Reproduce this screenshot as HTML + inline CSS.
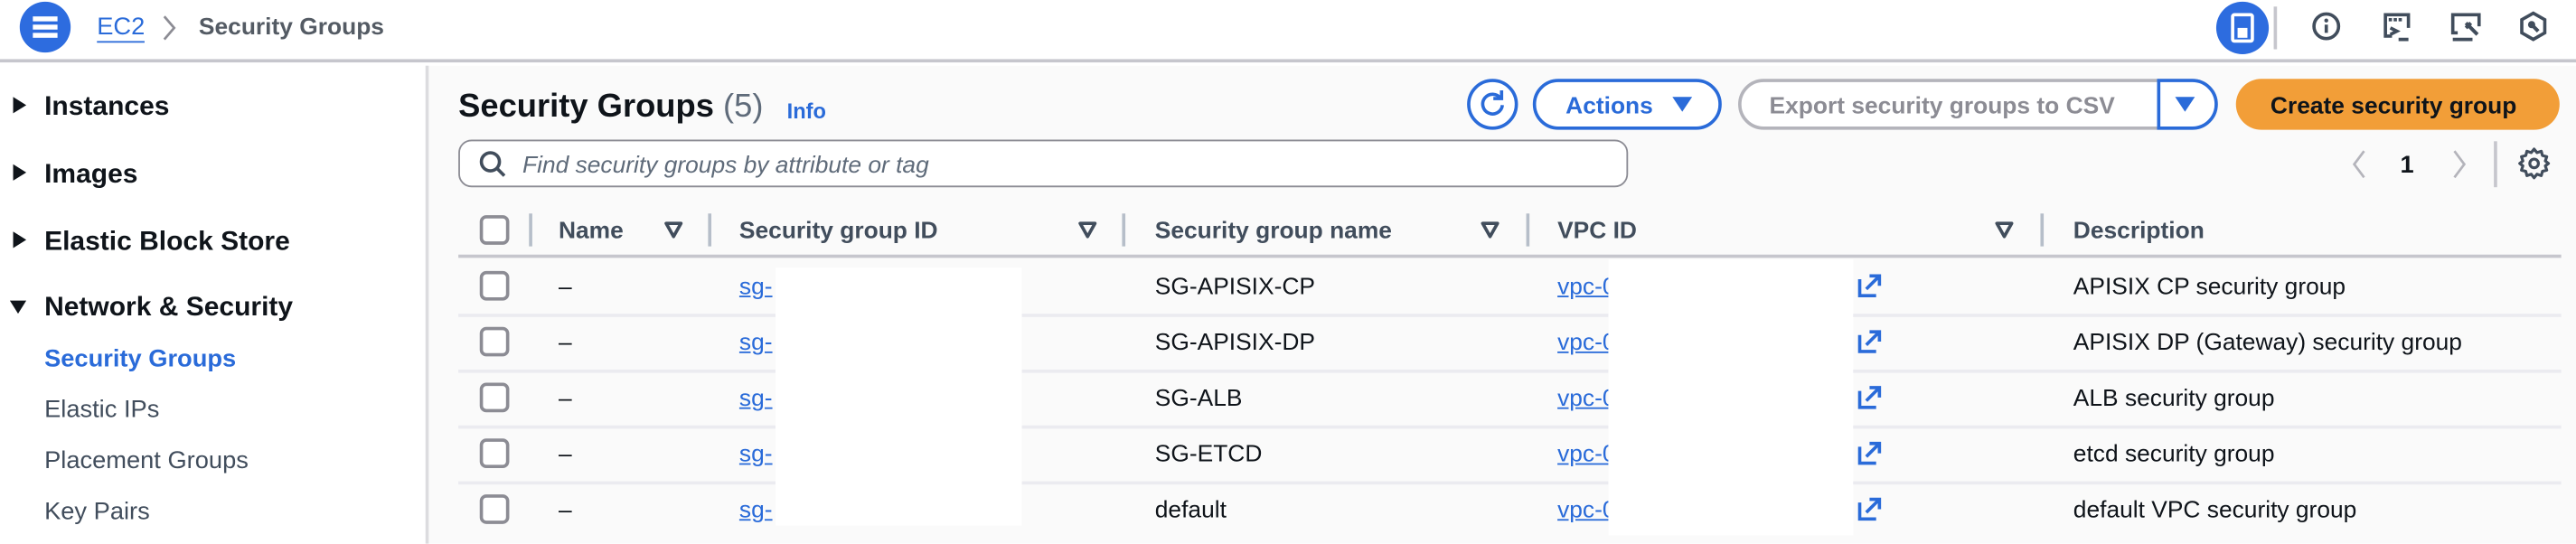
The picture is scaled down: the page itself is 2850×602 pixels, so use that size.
<!DOCTYPE html>
<html><head><meta charset="utf-8"><style>
*{margin:0;padding:0;box-sizing:border-box}
html,body{width:2850px;height:602px;overflow:hidden;background:#fff;font-family:"Liberation Sans",sans-serif}
#w{position:absolute;left:0;top:0;width:1568px;height:331px;transform:scale(1.8176);transform-origin:0 0;background:#fff}
.a{position:absolute;white-space:nowrap}
.nav{font-size:16.5px;font-weight:bold;color:#0f141a}
.sub{font-size:15px;color:#414d5c}
.th{font-size:14.5px;font-weight:bold;color:#414d5c;top:131px}
.cell{font-size:14.5px;color:#0f141a}
.nav,.sub,.th,.cell,.t{margin-top:2px}
.lnk{color:#2a6bd9;text-decoration:underline}
.cb{position:absolute;width:18px;height:18px;border:2px solid #8c8c94;border-radius:4px;background:#fff}
.div{position:absolute;width:2px;height:20px;background:#b6bec9;top:130px}
.sep{position:absolute;left:279px;width:1280px;height:2px;background:#ebebf0}
.tri{position:absolute;width:0;height:0}
</style></head><body><div id="w">
<div class="a" style="left:0;top:0;width:1568px;height:38px;background:#fff;border-bottom:2px solid #c6c6cd"></div>
<div class="a" style="left:12px;top:1px;width:31px;height:31px;border-radius:50%;background:#2d6cdf"></div>
<div class="a" style="left:20px;top:10px;width:15px;height:2.5px;background:#fff;box-shadow:0 5px 0 #fff,0 10px 0 #fff"></div>
<div class="a" style="left:59px;top:8px;font-size:15px;color:#2a6bd9;border-bottom:1.5px solid #2a6bd9;line-height:17px">EC2</div>
<svg class="a" style="left:98px;top:8px" width="10" height="18"><path d="M2 2l6 7-6 7" fill="none" stroke="#8c8c94" stroke-width="1.5"/></svg>
<div class="a" style="left:121px;top:9px;font-size:14.5px;font-weight:bold;color:#545b64">Security Groups</div>
<div class="a" style="left:1349px;top:1px;width:32px;height:32px;border-radius:50%;background:#2d6cdf"></div>
<div class="a" style="left:1358px;top:8px;width:14px;height:18px;border:2px solid #fff;border-radius:2px"></div>
<div class="a" style="left:1362px;top:17px;width:6px;height:6px;background:#fff"></div>
<div class="a" style="left:1384px;top:4px;width:1.5px;height:26px;background:#c6c6cd"></div>
<svg class="a" style="left:1405px;top:5px" width="22" height="22" viewBox="0 0 22 22"><circle cx="11" cy="11" r="7.5" fill="none" stroke="#414d5c" stroke-width="2"/><rect x="10" y="10" width="2" height="5" fill="#414d5c"/><circle cx="11" cy="7.5" r="1.2" fill="#414d5c"/></svg>
<svg class="a" style="left:1448px;top:5px" width="22" height="22" viewBox="0 0 22 22"><path d="M8 17H4V4h14v8" fill="none" stroke="#414d5c" stroke-width="2"/><path d="M6 7h2M9 7h2M12 7h2" stroke="#414d5c" stroke-width="2"/><path d="M7 12l4 2-4 2" fill="none" stroke="#414d5c" stroke-width="2"/><path d="M12 19h6" stroke="#414d5c" stroke-width="2"/></svg>
<svg class="a" style="left:1490px;top:5px" width="22" height="22" viewBox="0 0 22 22"><path d="M6 15H3V4h16v7" fill="none" stroke="#414d5c" stroke-width="2"/><path d="M3 19h12" stroke="#414d5c" stroke-width="2"/><path d="M11 9l7 7M14 9l-3 3" fill="none" stroke="#414d5c" stroke-width="2.2"/></svg>
<svg class="a" style="left:1531px;top:5px" width="22" height="22" viewBox="0 0 22 22"><path d="M11 3l7 4v8l-7 4-7-4V7z" fill="none" stroke="#414d5c" stroke-width="2"/><circle cx="10" cy="10" r="2.2" fill="#414d5c"/><path d="M10 10l4 4" stroke="#414d5c" stroke-width="2.2"/></svg>
<div class="a" style="left:259px;top:40px;width:2px;height:291px;background:#dcdcdf"></div>
<div class="a" style="left:261px;top:40px;width:1307px;height:291px;background:#fafafa"></div>
<div class="tri a" style="left:8px;top:59px;border-left:8px solid #0f141a;border-top:5.5px solid transparent;border-bottom:5.5px solid transparent"></div>
<div class="a nav" style="left:27px;top:54px">Instances</div>
<div class="tri a" style="left:8px;top:100px;border-left:8px solid #0f141a;border-top:5.5px solid transparent;border-bottom:5.5px solid transparent"></div>
<div class="a nav" style="left:27px;top:95px">Images</div>
<div class="tri a" style="left:8px;top:141px;border-left:8px solid #0f141a;border-top:5.5px solid transparent;border-bottom:5.5px solid transparent"></div>
<div class="a nav" style="left:27px;top:136px">Elastic Block Store</div>
<div class="tri a" style="left:6px;top:183px;border-top:8px solid #0f141a;border-left:5.5px solid transparent;border-right:5.5px solid transparent"></div>
<div class="a nav" style="left:27px;top:176px">Network &amp; Security</div>
<div class="a sub" style="left:27px;top:208px;color:#2a6bd9;font-weight:bold">Security Groups</div>
<div class="a sub" style="left:27px;top:239px">Elastic IPs</div>
<div class="a sub" style="left:27px;top:270px">Placement Groups</div>
<div class="a sub" style="left:27px;top:301px">Key Pairs</div>
<div class="a t" style="left:279px;top:52px;font-size:20px;font-weight:bold;color:#0f141a">Security Groups <span style="font-weight:normal;color:#5f6b7a">(5)</span></div>
<div class="a t" style="left:479px;top:58px;font-size:13px;font-weight:bold;color:#2a6bd9">Info</div>
<div class="a" style="left:893px;top:48px;width:31px;height:31px;border:2px solid #2a6bd9;border-radius:50%;background:#fff"></div>
<svg class="a" style="left:898px;top:53px" width="21" height="21" viewBox="0 0 21 21"><path d="M15.5 7A6 6 0 1 0 16.5 11" fill="none" stroke="#2a6bd9" stroke-width="2"/><path d="M11 7h5V2" fill="none" stroke="#2a6bd9" stroke-width="2"/></svg>
<div class="a" style="left:933px;top:48px;width:115px;height:31px;border:2px solid #2a6bd9;border-radius:16px;background:#fff"></div>
<div class="a t" style="left:953px;top:55px;font-size:14.5px;font-weight:bold;color:#2a6bd9">Actions</div>
<div class="tri a" style="left:1018px;top:59px;border-top:9px solid #2a6bd9;border-left:6px solid transparent;border-right:6px solid transparent"></div>
<div class="a" style="left:1058px;top:48px;width:292px;height:31px;border:2px solid #b4b4bb;border-radius:16px;background:#fff"></div>
<div class="a" style="left:1313px;top:48px;width:37px;height:31px;border:2px solid #2a6bd9;border-radius:0 16px 16px 0;background:#fff"></div>
<div class="a t" style="left:1077px;top:55px;font-size:14.5px;font-weight:bold;color:#8c8c94">Export security groups to CSV</div>
<div class="tri a" style="left:1324px;top:59px;border-top:9px solid #2a6bd9;border-left:6px solid transparent;border-right:6px solid transparent"></div>
<div class="a" style="left:1361px;top:48px;width:197px;height:31px;border-radius:16px;background:#f29e38"></div>
<div class="a t" style="left:1382px;top:55px;font-size:14.5px;font-weight:bold;color:#0f141a">Create security group</div>
<div class="a" style="left:279px;top:85px;width:712px;height:29px;border:1.5px solid #8c8c94;border-radius:8px;background:#fff"></div>
<svg class="a" style="left:290px;top:90px" width="20" height="20" viewBox="0 0 20 20"><circle cx="8.5" cy="8.5" r="5.5" fill="none" stroke="#414d5c" stroke-width="2"/><path d="M12.5 12.5l4.5 4.5" stroke="#414d5c" stroke-width="2"/></svg>
<div class="a t" style="left:318px;top:91px;font-size:14.5px;font-style:italic;color:#5f6b7a">Find security groups by attribute or tag</div>
<svg class="a" style="left:1430px;top:90px" width="12" height="20"><path d="M9 2L3 10l6 8" fill="none" stroke="#b4b4bb" stroke-width="1.5"/></svg>
<div class="a t" style="left:1461px;top:90px;font-size:15px;font-weight:bold;color:#0f141a">1</div>
<svg class="a" style="left:1491px;top:90px" width="12" height="20"><path d="M3 2l6 8-6 8" fill="none" stroke="#b4b4bb" stroke-width="1.5"/></svg>
<div class="a" style="left:1518px;top:86px;width:1.5px;height:28px;background:#c6c6cd"></div>
<svg class="a" style="left:1532px;top:89px" width="21" height="21" viewBox="0 0 24 24"><path d="M12 2l2 2.5 3-1 .8 3 3 .8-1 3L22 12l-2.2 1.7 1 3-3 .8-.8 3-3-1L12 22l-2-2.5-3 1-.8-3-3-.8 1-3L2 12l2.2-1.7-1-3 3-.8.8-3 3 1z" fill="none" stroke="#414d5c" stroke-width="2" stroke-linejoin="round"/><circle cx="12" cy="12" r="3" fill="none" stroke="#414d5c" stroke-width="2"/></svg>
<div class="cb" style="left:292px;top:131px"></div>
<div class="div" style="left:322px"></div>
<div class="a th" style="left:340px">Name</div>
<div class="div" style="left:431px"></div>
<div class="a th" style="left:450px">Security group ID</div>
<div class="div" style="left:683px"></div>
<div class="a th" style="left:703px">Security group name</div>
<div class="div" style="left:929px"></div>
<div class="a th" style="left:948px">VPC ID</div>
<div class="div" style="left:1242px"></div>
<div class="a th" style="left:1262px">Description</div>
<svg class="a" style="left:404px;top:134px" width="12" height="12"><path d="M1.5 2h9L6 10z" fill="none" stroke="#414d5c" stroke-width="2" stroke-linejoin="round"/></svg>
<svg class="a" style="left:656px;top:134px" width="12" height="12"><path d="M1.5 2h9L6 10z" fill="none" stroke="#414d5c" stroke-width="2" stroke-linejoin="round"/></svg>
<svg class="a" style="left:901px;top:134px" width="12" height="12"><path d="M1.5 2h9L6 10z" fill="none" stroke="#414d5c" stroke-width="2" stroke-linejoin="round"/></svg>
<svg class="a" style="left:1214px;top:134px" width="12" height="12"><path d="M1.5 2h9L6 10z" fill="none" stroke="#414d5c" stroke-width="2" stroke-linejoin="round"/></svg>
<div class="sep" style="top:155px;background:#c6c6cd"></div>
<div class="sep" style="top:191px"></div>
<div class="sep" style="top:225px"></div>
<div class="sep" style="top:259px"></div>
<div class="sep" style="top:293px"></div>
<div class="cb" style="left:292px;top:165px"></div><div class="cb" style="left:292px;top:199px"></div><div class="cb" style="left:292px;top:233px"></div><div class="cb" style="left:292px;top:267px"></div><div class="cb" style="left:292px;top:301px"></div>
<div class="a cell" style="left:340px;top:165px">–</div><div class="a cell" style="left:340px;top:199px">–</div><div class="a cell" style="left:340px;top:233px">–</div><div class="a cell" style="left:340px;top:267px">–</div><div class="a cell" style="left:340px;top:301px">–</div>
<div class="a cell lnk" style="left:450px;top:165px">sg-</div><div class="a cell lnk" style="left:450px;top:199px">sg-</div><div class="a cell lnk" style="left:450px;top:233px">sg-</div><div class="a cell lnk" style="left:450px;top:267px">sg-</div><div class="a cell lnk" style="left:450px;top:301px">sg-</div>
<div class="a cell" style="left:703px;top:165px">SG-APISIX-CP</div><div class="a cell" style="left:703px;top:199px">SG-APISIX-DP</div><div class="a cell" style="left:703px;top:233px">SG-ALB</div><div class="a cell" style="left:703px;top:267px">SG-ETCD</div><div class="a cell" style="left:703px;top:301px">default</div>
<div class="a cell lnk" style="left:948px;top:165px">vpc-0</div><div class="a cell lnk" style="left:948px;top:199px">vpc-0</div><div class="a cell lnk" style="left:948px;top:233px">vpc-0</div><div class="a cell lnk" style="left:948px;top:267px">vpc-0</div><div class="a cell lnk" style="left:948px;top:301px">vpc-0</div>
<div class="a" style="left:472px;top:163px;width:150px;height:157px;background:#fff"></div>
<div class="a" style="left:979px;top:158px;width:149px;height:168px;background:#fff"></div>
<svg class="a" style="left:1130px;top:166px" width="16" height="16" viewBox="0 0 16 16"><path d="M2 4v10h10" fill="none" stroke="#2a6bd9" stroke-width="2"/><path d="M6 10l7-7M8 2h6v6" fill="none" stroke="#2a6bd9" stroke-width="2"/></svg>
<svg class="a" style="left:1130px;top:200px" width="16" height="16" viewBox="0 0 16 16"><path d="M2 4v10h10" fill="none" stroke="#2a6bd9" stroke-width="2"/><path d="M6 10l7-7M8 2h6v6" fill="none" stroke="#2a6bd9" stroke-width="2"/></svg>
<svg class="a" style="left:1130px;top:234px" width="16" height="16" viewBox="0 0 16 16"><path d="M2 4v10h10" fill="none" stroke="#2a6bd9" stroke-width="2"/><path d="M6 10l7-7M8 2h6v6" fill="none" stroke="#2a6bd9" stroke-width="2"/></svg>
<svg class="a" style="left:1130px;top:268px" width="16" height="16" viewBox="0 0 16 16"><path d="M2 4v10h10" fill="none" stroke="#2a6bd9" stroke-width="2"/><path d="M6 10l7-7M8 2h6v6" fill="none" stroke="#2a6bd9" stroke-width="2"/></svg>
<svg class="a" style="left:1130px;top:302px" width="16" height="16" viewBox="0 0 16 16"><path d="M2 4v10h10" fill="none" stroke="#2a6bd9" stroke-width="2"/><path d="M6 10l7-7M8 2h6v6" fill="none" stroke="#2a6bd9" stroke-width="2"/></svg>
<div class="a cell" style="left:1262px;top:165px">APISIX CP security group</div>
<div class="a cell" style="left:1262px;top:199px">APISIX DP (Gateway) security group</div>
<div class="a cell" style="left:1262px;top:233px">ALB security group</div>
<div class="a cell" style="left:1262px;top:267px">etcd security group</div>
<div class="a cell" style="left:1262px;top:301px">default VPC security group</div>
</div></body></html>
